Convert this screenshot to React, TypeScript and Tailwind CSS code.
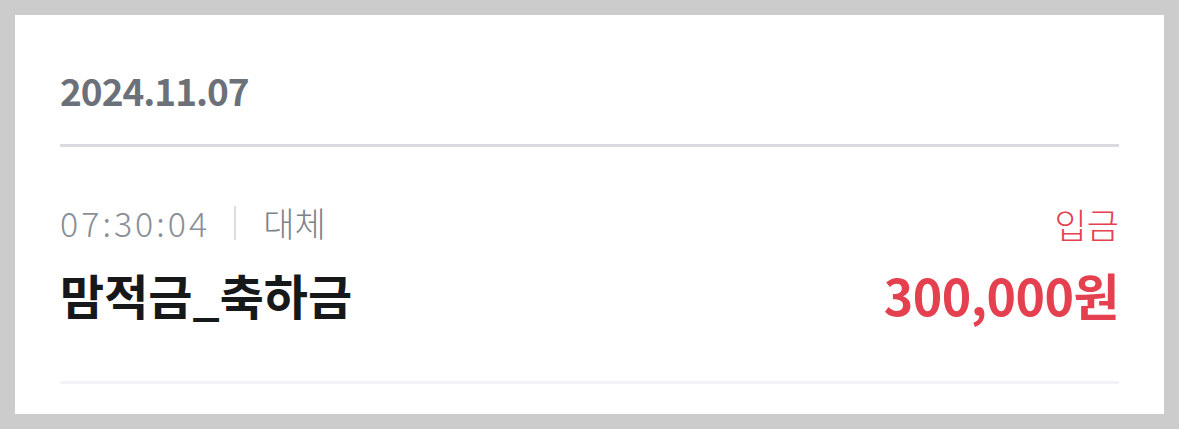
import React from 'react';

const font = { fontFamily: '"Noto Sans CJK KR", "Noto Sans", sans-serif' };

export default function App() {
  return (
    <div className="w-[1179px] h-[429px] bg-[#cccccc] p-[15px]" style={font}>
      <div className="bg-white h-[399px] px-[45px] flex flex-col">
        <div className="h-[129px] pt-[22px] flex items-center">
          <span className="text-[37px] font-bold leading-none tracking-[-1px] text-[#6b7079]">2024.11.07</span>
        </div>
        <div className="h-[3px] bg-[#d9dbe0]" />

        <div className="mt-[56px] h-[40px] flex items-center justify-between">
          <div className="flex items-center">
            <span className="text-[34px] font-light leading-none tracking-[3px] text-[#8a8f97]">07:30:04</span>
            <span className="w-[2px] h-[34px] bg-[#dcdde0] ml-[24px] mr-[27px]" />
            <span className="text-[34px] font-light leading-none text-[#7d828a]">대체</span>
          </div>
          <span className="text-[35px] font-light leading-none text-[#e5404f]">입금</span>
        </div>

        <div className="mt-[26px] h-[50px] flex items-center justify-between">
          <span className="text-[48px] font-bold leading-none text-[#17181a]">맘적금_축하금</span>
          <span className="text-[50px] font-bold leading-none tracking-[-0.5px] text-[#e5404f]">300,000원</span>
        </div>

        <div className="mt-[62px] h-[3px] bg-[#f3f3f7]" />
      </div>
    </div>
  );
}
